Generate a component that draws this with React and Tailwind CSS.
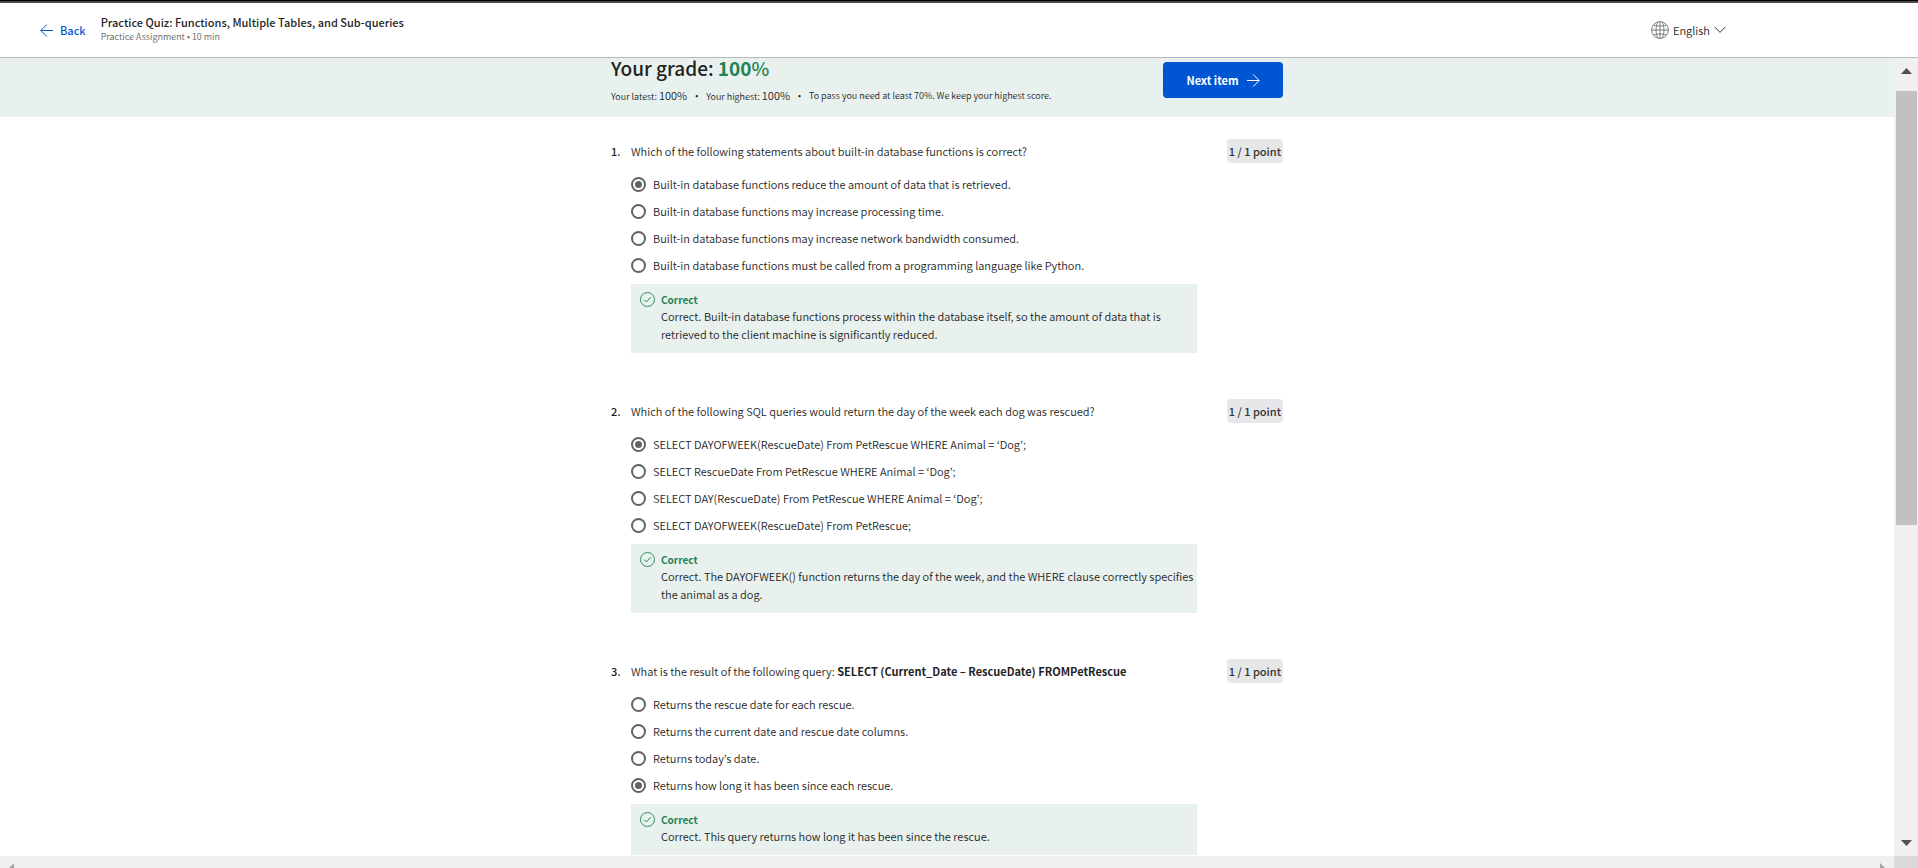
const questions = [
  {
    prompt: 'Which of the following statements about built-in database functions is correct?',
    options: [
      'Built-in database functions reduce the amount of data that is retrieved.',
      'Built-in database functions may increase processing time.',
      'Built-in database functions may increase network bandwidth consumed.',
      'Built-in database functions must be called from a programming language like Python.',
    ],
    selected: 0,
    feedback:
      'Correct. Built-in database functions process within the database itself, so the amount of data that is retrieved to the client machine is significantly reduced.',
  },
  {
    prompt: 'Which of the following SQL queries would return the day of the week each dog was rescued?',
    options: [
      'SELECT DAYOFWEEK(RescueDate) From PetRescue WHERE Animal = ‘Dog’;',
      'SELECT RescueDate From PetRescue WHERE Animal = ‘Dog’;',
      'SELECT DAY(RescueDate) From PetRescue WHERE Animal = ‘Dog’;',
      'SELECT DAYOFWEEK(RescueDate) From PetRescue;',
    ],
    selected: 0,
    feedback:
      'Correct. The DAYOFWEEK() function returns the day of the week, and the WHERE clause correctly specifies the animal as a dog.',
  },
  {
    prompt: 'What is the result of the following query: ',
    code: 'SELECT (Current_Date – RescueDate) FROMPetRescue',
    options: [
      'Returns the rescue date for each rescue.',
      'Returns the current date and rescue date columns.',
      'Returns today’s date.',
      'Returns how long it has been since each rescue.',
    ],
    selected: 3,
    feedback: 'Correct. This query returns how long it has been since the rescue.',
  },
];

function ArrowIcon({ left = false }) {
  return (
    <svg width="13" height="13" viewBox="0 0 13 13" fill="none" stroke="currentColor" aria-hidden="true">
      <path d={left ? 'M13 6.5H.8M6.8.5l-6 6 6 6' : 'M0 6.5h12.2M6.2.5l6 6-6 6'} />
    </svg>
  );
}

function GlobeIcon() {
  return (
    <svg width="18" height="18" viewBox="0 0 18 18" fill="none" stroke="#707070" strokeWidth="0.9" aria-hidden="true">
      <circle cx="9" cy="9" r="8.4" />
      <path d="M7 .9C4.400 5 4.400 13 7 17.100M11 .9c2.600 4.100 2.600 12.100 0 16.200M.6 9h16.800M9 .6v16.800M2.600 4.200c3.600 1.200 9.200 1.200 12.800 0M2.600 13.800c3.600-1.200 9.200-1.200 12.800 0" />
    </svg>
  );
}

function CheckCircleIcon() {
  return (
    <svg className="shrink-0" width="15" height="15" viewBox="0 0 15 15" fill="none" stroke="#1f8354" aria-hidden="true">
      <circle cx="7.5" cy="7.5" r="7" strokeWidth="0.9" />
      <path d="M4.2 7.7l2.2 2.2 4.4-4.6" />
    </svg>
  );
}

function Header() {
  return (
    <header className="flex h-[55px] shrink-0 items-center border-b border-[#b4bab8] bg-white pr-48 pl-10">
      <a href="#back" className="flex items-center gap-[7px] font-medium text-[#0056d2]">
        <ArrowIcon left />
        Back
      </a>
      <div className="ml-[15px] flex flex-col pb-0.5">
        <h1 className="leading-4 font-medium">Practice Quiz: Functions, Multiple Tables, and Sub-queries</h1>
        <p className="text-[9px] leading-[14px] text-[#636363]">Practice Assignment • 10 min</p>
      </div>
      <div className="relative ml-auto flex items-center gap-1">
        <GlobeIcon />
        <label htmlFor="language" className="sr-only">Language</label>
        <select id="language" className="field-sizing-content h-6 appearance-none bg-transparent pr-4 leading-6">
          <option>English</option>
        </select>
        <svg className="pointer-events-none absolute right-0" width="12" height="8" viewBox="0 0 12 8" fill="none" stroke="#333" aria-hidden="true">
          <path d="M.8 1L6 6.4 11.2 1" />
        </svg>
      </div>
    </header>
  );
}

function GradeBanner() {
  return (
    <section className="bg-[#e8f1ee] pt-0.5 pb-2.5">
      <div className="mx-auto flex max-w-[672px] items-start justify-between">
        <div>
          <h2 className="text-[19px] leading-4 font-medium">
            Your grade: <span className="text-[#1f8354]"><b className="font-bold">100</b>%</span>
          </h2>
          <p className="mt-[9px] flex items-center gap-2 text-[9px] leading-5">
            <span>Your latest: <span className="text-[11px]">100%</span></span>
            <span>•</span>
            <span>Your highest: <span className="text-[11px]">100%</span></span>
            <span>•</span>
            <span>To pass you need at least 70%. We keep your highest score.</span>
          </p>
        </div>
        <button type="button" className="mt-0.5 flex h-9 w-[120px] items-center justify-center gap-2 rounded-sm bg-[#0056d2] font-bold text-white">
          Next item
          <ArrowIcon />
        </button>
      </div>
    </section>
  );
}

function Question({ index, question }) {
  const name = `question-${index}`;
  return (
    <li className="flex items-start">
      <span className="w-5 shrink-0 leading-6 font-medium">{index}.</span>
      <fieldset className="min-w-0 flex-1">
        <div className="flex items-start justify-between">
          <legend className="leading-6">
            {question.prompt}
            {question.code && <strong className="font-bold">{question.code}</strong>}
          </legend>
          <span className="rounded-sm bg-[#e5e7e8] px-0.5 leading-6 font-medium text-[#333]">1 / 1 point</span>
        </div>
        <div className="mt-2">
          {question.options.map((option, i) => (
            <label key={option} className="flex h-[27px] items-center gap-[7px]">
              <input
                type="radio"
                name={name}
                defaultChecked={i === question.selected}
                className="size-[15px] shrink-0 appearance-none rounded-full border-2 border-[#636363] bg-clip-content p-0.5 checked:bg-[#636363]"
              />
              {option}
            </label>
          ))}
        </div>
        <div className="mt-[5px] flex max-w-[566px] items-start gap-1.5 bg-[#e8f1ee] pt-2 pr-0.5 pb-2.5 pl-[9px]">
          <CheckCircleIcon />
          <div>
            <p className="text-[10px] leading-[15px] font-bold text-[#1f8354]">Correct</p>
            <p className="leading-[18px]">{question.feedback}</p>
          </div>
        </div>
      </fieldset>
    </li>
  );
}

function VerticalScrollbar() {
  return (
    <div className="flex w-6 shrink-0 flex-col items-center bg-[#f0f0f0] pt-2.5 pb-2.5" aria-hidden="true">
      <svg width="11" height="6" viewBox="0 0 11 6"><path d="M0 6L5.5 0 11 6z" fill="#505050" /></svg>
      <div className="mt-[17px] min-h-0 flex-1 self-stretch pr-px pl-0.5">
        <div className="h-[58%] bg-[#c1c1c1]" />
      </div>
      <svg width="11" height="6" viewBox="0 0 11 6"><path d="M0 0L5.5 6 11 0z" fill="#505050" /></svg>
    </div>
  );
}

function HorizontalScrollbar() {
  return (
    <div className="flex h-3 shrink-0 bg-[#f0f0f0]" aria-hidden="true">
      <div className="flex flex-1 items-end justify-between px-[9px]">
        <svg width="5" height="5" viewBox="0 0 5 5"><path d="M5 0v5H0z" fill="#a3a3a3" /></svg>
        <svg width="5" height="5" viewBox="0 0 5 5"><path d="M0 0v5h5z" fill="#a3a3a3" /></svg>
      </div>
      <div className="w-6 bg-[#dadada]" />
    </div>
  );
}

export default function App() {
  return (
    <div className="flex h-screen flex-col overflow-hidden border-t border-black bg-white font-['Noto_Sans_CJK_KR',sans-serif] text-[11px] font-[350] text-[#1f1f1f]">
      <div className="h-0.5 shrink-0 bg-[#4a4a4a]" />
      <Header />
      <div className="flex min-h-0 flex-1">
        <main className="flex-1 overflow-y-auto [scrollbar-width:none]">
          <GradeBanner />
          <ol className="mx-auto flex max-w-[672px] flex-col gap-[46px] pt-[22px]">
            {questions.map((question, i) => (
              <Question key={question.prompt} index={i + 1} question={question} />
            ))}
          </ol>
        </main>
        <VerticalScrollbar />
      </div>
      <HorizontalScrollbar />
    </div>
  );
}
